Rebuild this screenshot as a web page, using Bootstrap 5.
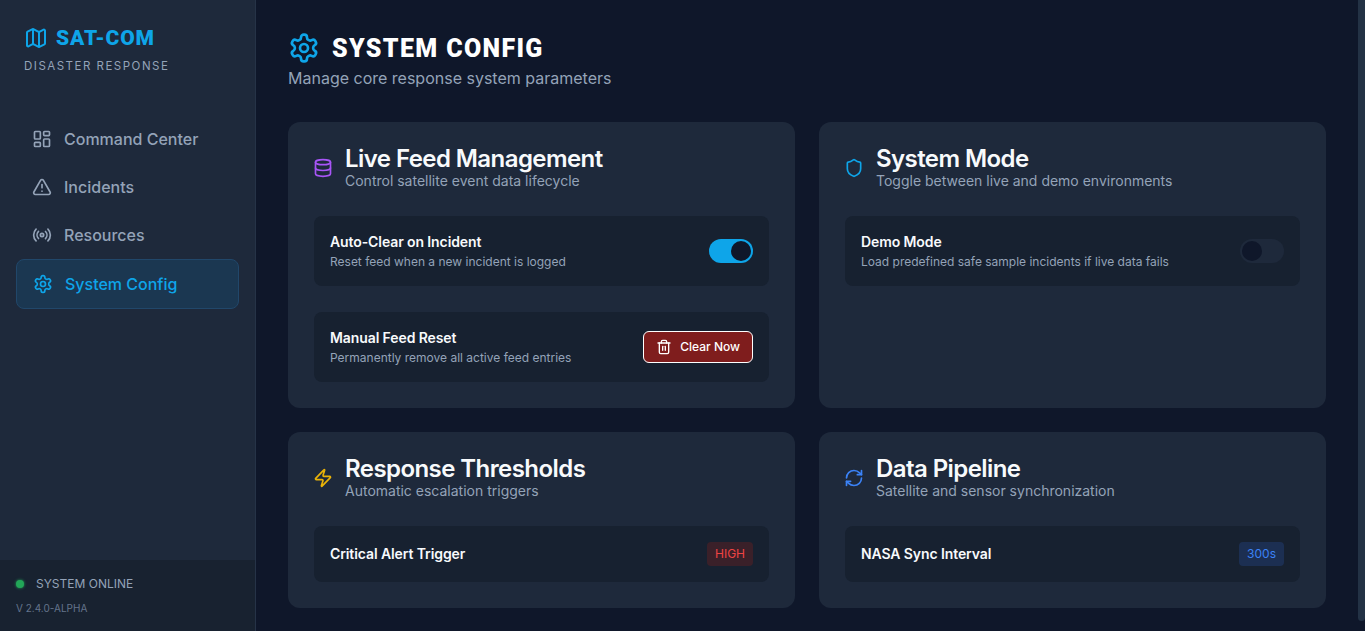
<!DOCTYPE html>
<html lang="en">
<head>
<meta charset="utf-8">
<title>System Config</title>
<link rel="stylesheet" href="https://cdn.jsdelivr.net/npm/bootstrap@5.3.0/dist/css/bootstrap.min.css">
<style>
html,body{height:100%;overflow:hidden}
body{background:#0f172a;font-family:Inter,"Liberation Sans",sans-serif;color:#f8fafc}
.shell{height:631px}
.side{width:256px;flex:none;background:#1e293b;border-right:1px solid #263347}
.brand{padding:24px 24px 0 24px;height:107px}
.brand-name{font-family:Roboto,"Liberation Sans",sans-serif;font-weight:900;font-size:21px;letter-spacing:.85px;color:#0ea5e9;line-height:28px}
.brand-sub{font-size:11.5px;letter-spacing:1.5px;color:#94a3b8;line-height:16px;margin-top:6px}
.side-nav{padding:8px 16px 0 16px}
.nav-row{height:48px;padding-left:16px;color:#94a3b8;font-size:16px;font-weight:500;gap:12px;border-radius:8px}
.nav-row.on{height:50px;padding-left:16px;color:#0ea5e9;background:#1b3751;border:1px solid #21476a}
.foot{background:#182230;padding:16px;height:71px}
.dot{width:8px;height:8px;border-radius:50%;background:#22a658;box-shadow:0 0 3px #22a658}
.online{font-size:12px;color:#94a3b8;line-height:16px;gap:12px}
.ver{font-size:10px;color:#64748b;line-height:14px;margin-top:9px}
.main-area{padding:32px 32px 0 32px;width:1102px;flex:none}
.page-head{font-family:Roboto,"Liberation Sans",sans-serif;font-weight:900;font-size:25px;letter-spacing:1.35px;line-height:32px;height:32px;color:#fff;margin:0;gap:12px}
.page-head span{margin-top:2px}
.page-sub{color:#94a3b8;font-size:16px;line-height:24px;margin:2px 0 0 0}
.cols{display:grid;grid-template-columns:507px 507px;gap:24px;margin-top:32px;grid-template-rows:286px 176px}
.panel{background:#1e293b;border-radius:12px;padding:24px 26px}
.panel-head{gap:12px;margin:0 0 26px -1px}
.panel-head h3{font-size:24px;font-weight:600;letter-spacing:-.57px;line-height:26px;margin:0;color:#f8fafc}
.panel-head p{font-size:14px;line-height:18px;color:#94a3b8;margin:0}
.opt{background:#172130;border-radius:8px;padding:0 16px;height:70px;margin-bottom:26px}
.opt.slim{height:56px;margin-bottom:0}
.opt-t{font-size:14px;font-weight:600;letter-spacing:-.1px;line-height:20px;color:#f8fafc}
.opt-d{font-size:12px;line-height:16px;color:#94a3b8;margin-top:2px}
.tog{width:44px;height:24px;border-radius:12px;padding:2px;background:#0ea5e9;display:flex;justify-content:flex-end}
.tog i{display:block;width:20px;height:20px;border-radius:50%;background:#0f172a}
.tog.off{background:#1e293b;justify-content:flex-start}
.btn-clear{background:#7f1d1d;color:#fff;border:1px solid #fff;border-radius:6px;font-size:12px;font-weight:500;height:32px;padding:0 12px;gap:8px}
.btn-clear:hover{background:#7f1d1d;color:#fff;border-color:#fff}
.chip{font-size:12px;font-weight:400;line-height:16px;padding:4px 8px;border-radius:4px}
.chip-r{color:#ef4444;background:#3a2029}
.chip-b{color:#3b82f6;background:#1c2f52}
.scroll-rail{width:7px;flex:none;margin-left:auto;background:#233245;height:621px;border-radius:0 0 4px 4px}
svg.ic{fill:none;stroke:currentColor;stroke-width:2;stroke-linecap:round;stroke-linejoin:round;flex:none}
.c-purple{color:#a855f7}.c-sky{color:#0ea5e9}.c-amber{color:#eab308}.c-blue{color:#3b82f6}
</style>
</head>
<body>
<div class="shell d-flex">
<aside class="side d-flex flex-column">
<div class="brand">
<div class="brand-name d-flex align-items-center gap-2">
<svg class="ic" width="24" height="24" viewBox="0 0 24 24"><path d="M14.106 5.553a2 2 0 0 0 1.788 0l3.659-1.83A1 1 0 0 1 21 4.619v12.764a1 1 0 0 1-.553.894l-4.553 2.277a2 2 0 0 1-1.788 0l-4.212-2.106a2 2 0 0 0-1.788 0l-3.659 1.83A1 1 0 0 1 3 19.381V6.618a1 1 0 0 1 .553-.894l4.553-2.277a2 2 0 0 1 1.788 0z"/><path d="M15 5.764v15"/><path d="M9 3.236v15"/></svg>
<span>SAT-COM</span></div>
<div class="brand-sub">DISASTER RESPONSE</div>
</div>
<nav class="side-nav flex-grow-1">
<div class="nav-row d-flex align-items-center"><svg class="ic" width="20" height="20" viewBox="0 0 24 24"><rect x="3" y="3" width="7" height="9" rx="1"/><rect x="14" y="3" width="7" height="5" rx="1"/><rect x="14" y="12" width="7" height="9" rx="1"/><rect x="3" y="16" width="7" height="5" rx="1"/></svg><span>Command Center</span></div>
<div class="nav-row d-flex align-items-center"><svg class="ic" width="20" height="20" viewBox="0 0 24 24"><path d="m21.73 18-8-14a2 2 0 0 0-3.48 0l-8 14A2 2 0 0 0 4 21h16a2 2 0 0 0 1.73-3"/><path d="M12 9v4"/><path d="M12 17h.01"/></svg><span>Incidents</span></div>
<div class="nav-row d-flex align-items-center"><svg class="ic" width="20" height="20" viewBox="0 0 24 24"><path d="M4.9 19.1C1 15.2 1 8.8 4.9 4.9"/><path d="M7.8 16.2c-2.3-2.3-2.3-6.1 0-8.5"/><circle cx="12" cy="12" r="2"/><path d="M16.2 7.8c2.3 2.3 2.3 6.1 0 8.5"/><path d="M19.1 4.9C23 8.8 23 15.1 19.1 19"/></svg><span>Resources</span></div>
<div class="nav-row on d-flex align-items-center"><svg class="ic" width="20" height="20" viewBox="0 0 24 24"><path d="M12.22 2h-.44a2 2 0 0 0-2 2v.18a2 2 0 0 1-1 1.73l-.43.25a2 2 0 0 1-2 0l-.15-.08a2 2 0 0 0-2.73.73l-.22.38a2 2 0 0 0 .73 2.73l.15.1a2 2 0 0 1 1 1.72v.51a2 2 0 0 1-1 1.74l-.15.09a2 2 0 0 0-.73 2.73l.22.38a2 2 0 0 0 2.73.73l.15-.08a2 2 0 0 1 2 0l.43.25a2 2 0 0 1 1 1.73V20a2 2 0 0 0 2 2h.44a2 2 0 0 0 2-2v-.18a2 2 0 0 1 1-1.73l.43-.25a2 2 0 0 1 2 0l.15.08a2 2 0 0 0 2.73-.73l.22-.39a2 2 0 0 0-.73-2.73l-.15-.08a2 2 0 0 1-1-1.74v-.5a2 2 0 0 1 1-1.74l.15-.09a2 2 0 0 0 .73-2.73l-.22-.38a2 2 0 0 0-2.73-.73l-.15.08a2 2 0 0 1-2 0l-.43-.25a2 2 0 0 1-1-1.73V4a2 2 0 0 0-2-2z"/><circle cx="12" cy="12" r="3"/></svg><span>System Config</span></div>
</nav>
<div class="foot">
<div class="online d-flex align-items-center"><span class="dot"></span><span>SYSTEM ONLINE</span></div>
<div class="ver">V 2.4.0-ALPHA</div>
</div>
</aside>
<main class="main-area">
<h1 class="page-head d-flex align-items-center"><svg class="ic c-sky" width="32" height="32" viewBox="0 0 24 24"><path d="M12.22 2h-.44a2 2 0 0 0-2 2v.18a2 2 0 0 1-1 1.73l-.43.25a2 2 0 0 1-2 0l-.15-.08a2 2 0 0 0-2.73.73l-.22.38a2 2 0 0 0 .73 2.73l.15.1a2 2 0 0 1 1 1.72v.51a2 2 0 0 1-1 1.74l-.15.09a2 2 0 0 0-.73 2.73l.22.38a2 2 0 0 0 2.73.73l.15-.08a2 2 0 0 1 2 0l.43.25a2 2 0 0 1 1 1.73V20a2 2 0 0 0 2 2h.44a2 2 0 0 0 2-2v-.18a2 2 0 0 1 1-1.73l.43-.25a2 2 0 0 1 2 0l.15.08a2 2 0 0 0 2.73-.73l.22-.39a2 2 0 0 0-.73-2.73l-.15-.08a2 2 0 0 1-1-1.74v-.5a2 2 0 0 1 1-1.74l.15-.09a2 2 0 0 0 .73-2.73l-.22-.38a2 2 0 0 0-2.73-.73l-.15.08a2 2 0 0 1-2 0l-.43-.25a2 2 0 0 1-1-1.73V4a2 2 0 0 0-2-2z"/><circle cx="12" cy="12" r="3"/></svg><span>SYSTEM CONFIG</span></h1>
<p class="page-sub">Manage core response system parameters</p>
<div class="cols">
<section class="panel">
<div class="panel-head d-flex align-items-center"><svg class="ic c-purple" width="20" height="20" viewBox="0 0 24 24"><ellipse cx="12" cy="5" rx="9" ry="3"/><path d="M3 5V19A9 3 0 0 0 21 19V5"/><path d="M3 12A9 3 0 0 0 21 12"/></svg><div><h3>Live Feed Management</h3><p>Control satellite event data lifecycle</p></div></div>
<div class="opt d-flex align-items-center justify-content-between"><div><div class="opt-t">Auto-Clear on Incident</div><div class="opt-d">Reset feed when a new incident is logged</div></div><span class="tog"><i></i></span></div>
<div class="opt d-flex align-items-center justify-content-between mb-0"><div><div class="opt-t">Manual Feed Reset</div><div class="opt-d">Permanently remove all active feed entries</div></div><button type="button" class="btn btn-clear d-flex align-items-center"><svg class="ic" width="16" height="16" viewBox="0 0 24 24"><path d="M3 6h18"/><path d="M19 6v14c0 1-1 2-2 2H7c-1 0-2-1-2-2V6"/><path d="M8 6V4c0-1 1-2 2-2h4c1 0 2 1 2 2v2"/><path d="M10 11v6"/><path d="M14 11v6"/></svg><span>Clear Now</span></button></div>
</section>
<section class="panel">
<div class="panel-head d-flex align-items-center"><svg class="ic c-sky" width="20" height="20" viewBox="0 0 24 24"><path d="M20 13c0 5-3.5 7.500-7.660 8.950a1 1 0 0 1-.67-.01C7.500 20.500 4 18 4 13V6a1 1 0 0 1 1-1c2 0 4.500-1.200 6.240-2.720a1.170 1.170 0 0 1 1.520 0C14.510 3.810 17 5 19 5a1 1 0 0 1 1 1z"/></svg><div><h3>System Mode</h3><p>Toggle between live and demo environments</p></div></div>
<div class="opt d-flex align-items-center justify-content-between"><div><div class="opt-t">Demo Mode</div><div class="opt-d">Load predefined safe sample incidents if live data fails</div></div><span class="tog off"><i></i></span></div>
</section>
<section class="panel">
<div class="panel-head d-flex align-items-center"><svg class="ic c-amber" width="20" height="20" viewBox="0 0 24 24"><path d="M4 14a1 1 0 0 1-.78-1.630l9.900-10.200a.500.500 0 0 1 .860.460l-1.920 6.020A1 1 0 0 0 13 10h7a1 1 0 0 1 .780 1.630l-9.900 10.200a.500.500 0 0 1-.860-.460l1.920-6.020A1 1 0 0 0 11 14z"/></svg><div><h3>Response Thresholds</h3><p>Automatic escalation triggers</p></div></div>
<div class="opt slim d-flex align-items-center justify-content-between"><div class="opt-t">Critical Alert Trigger</div><span class="chip chip-r">HIGH</span></div>
</section>
<section class="panel">
<div class="panel-head d-flex align-items-center"><svg class="ic c-blue" width="20" height="20" viewBox="0 0 24 24"><path d="M3 12a9 9 0 0 1 9-9 9.750 9.750 0 0 1 6.740 2.740L21 8"/><path d="M21 3v5h-5"/><path d="M21 12a9 9 0 0 1-9 9 9.750 9.750 0 0 1-6.740-2.740L3 16"/><path d="M8 16H3v5"/></svg><div><h3>Data Pipeline</h3><p>Satellite and sensor synchronization</p></div></div>
<div class="opt slim d-flex align-items-center justify-content-between"><div class="opt-t">NASA Sync Interval</div><span class="chip chip-b">300s</span></div>
</section>
</div>
</main>
<div class="scroll-rail"></div>
</div>
<script src="https://cdn.jsdelivr.net/npm/bootstrap@5.3.0/dist/js/bootstrap.bundle.min.js"></script>
</body>
</html>
